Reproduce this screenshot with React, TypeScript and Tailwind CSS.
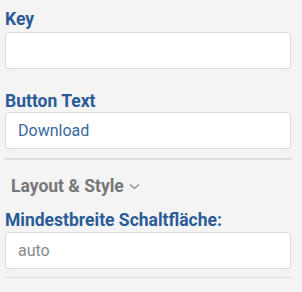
export default function App() {
  return (
    <div className="w-[302px] h-[292px] bg-[#f4f4f4] pl-[5px] pr-[11px] pt-[9px] font-['Roboto',sans-serif]">
      {/* --Key------------------------------------------ */}
      <label className="block text-[17.5px] leading-[20px] font-bold text-[#2a5b98] mb-[3px]">Key</label>
      <input
        type="text"
        className="block w-full h-[37px] bg-white border border-[#dcdcdc] rounded-[4px] px-3 text-[16px] text-[#3b68a0] outline-none"
      />

      {/* --Button Text------------------------------------------ */}
      <label className="block mt-[22px] text-[17.5px] leading-[20px] font-bold text-[#2a5b98] mb-[1px]">Button Text</label>
      <input
        type="text"
        defaultValue="Download"
        className="block w-full h-[37px] bg-white border border-[#dcdcdc] rounded-[4px] px-3 text-[16px] text-[#3b68a0] outline-none"
      />

      <div className="mt-[9px] h-[2px] w-[287px] bg-[#dedede]" />

      {/* --Layout & Style------------------------------------------ */}
      <button className="flex items-center gap-[5px] mt-[16px] pl-[6px] text-[17.5px] leading-[20px] font-bold text-[#777777]">
        Layout &amp; Style
        <svg width="11" height="7" viewBox="0 0 11 7" fill="none" stroke="#888" strokeWidth="1.2">
          <path d="M1 1.5l4.5 4 4.5-4" />
        </svg>
      </button>

      <label className="block mt-[14px] text-[17.5px] leading-[20px] font-bold text-[#2a5b98] mb-[2px]">Mindestbreite Schaltfläche:</label>
      <input
        type="text"
        placeholder="auto"
        className="block w-full h-[37px] bg-white border border-[#dcdcdc] rounded-[4px] px-3 text-[16px] text-[#3b68a0] placeholder:text-[#8a8a8a] outline-none"
      />

      <div className="mt-[8px] h-px w-[287px] bg-[#dcdcdc]" />
    </div>
  );
}
